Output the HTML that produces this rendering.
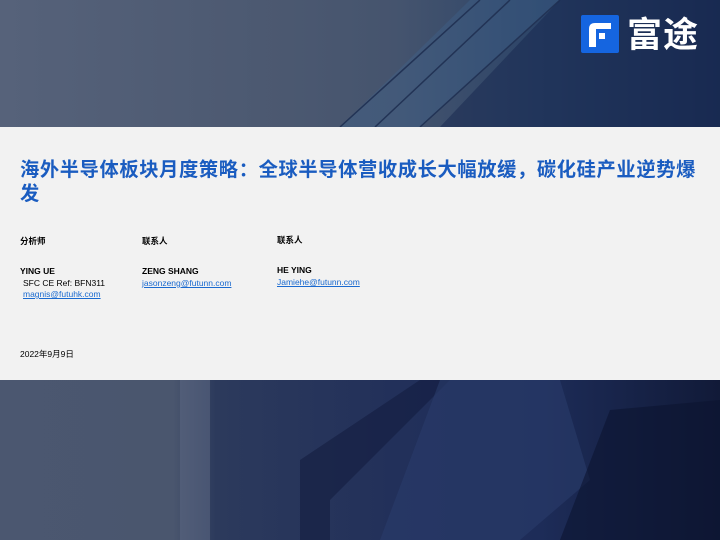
<!DOCTYPE html>
<html><head><meta charset="utf-8"><style>
body{margin:0;width:720px;height:540px;overflow:hidden;position:relative;font-family:"Liberation Sans","Noto Sans CJK SC",sans-serif;background:#1a2848}
.top{position:absolute;left:0;top:0;width:720px;height:127px;background:linear-gradient(90deg,#56627a 0%,#4b5870 40%,#45546e 55%,#2c4468 75%,#1b2e55 100%)}
.bot{position:absolute;left:0;top:380px;width:720px;height:160px;background:linear-gradient(90deg,#4b5770 0%,#4a566e 24%,#2c3a5c 30%,#22305a 55%,#1d2c58 75%,#111a38 100%)}
.band{position:absolute;left:0;top:127px;width:720px;height:253px;background:#f2f2f2}
.t{position:absolute;color:#1a5cc0;font-weight:bold;font-size:19.3px;line-height:24px;letter-spacing:0.6px;left:20px;top:156px;width:700px;white-space:nowrap;font-family:"Noto Sans CJK SC",sans-serif}
.s{position:absolute;font-size:8.5px;color:#000}
.b{font-weight:bold}
a{color:#1a6ad0;text-decoration:underline}
</style></head><body>
<div class="top">
<svg width="720" height="127" style="position:absolute;left:0;top:0">
<polygon points="470,0 560,0 420,127 340,127" fill="#3f6590" opacity=".35"/>
<line x1="480" y1="0" x2="340" y2="127" stroke="#223355" stroke-width="1.5"/>
<line x1="510" y1="0" x2="375" y2="127" stroke="#223355" stroke-width="1.5"/>
<line x1="560" y1="0" x2="420" y2="127" stroke="#223355" stroke-width="1.5"/>
<polygon points="560,0 720,0 720,127 440,127" fill="#15264d" opacity=".5"/>
</svg>
<div style="position:absolute;left:581px;top:15px;width:38px;height:38px;background:#1565e0;border-radius:2px"></div>
<svg style="position:absolute;left:581px;top:15px" width="38" height="38"><path d="M8 32V14Q8 8 14 8H30V14H15V32Z" fill="#fff"/><rect x="18" y="18" width="6" height="6" fill="#fff"/></svg>
<div style="position:absolute;left:627px;top:13px;color:#fff;font-size:35px;line-height:40px;font-weight:bold;font-family:'Noto Sans CJK SC',sans-serif;letter-spacing:1px">富途</div>
</div>
<div class="band"></div>
<div class="bot">
<svg width="720" height="160" style="position:absolute;left:0;top:0">
<rect x="180" y="0" width="30" height="160" fill="#5a6580" opacity=".6"/>
<polygon points="420,0 450,0 330,120 330,160 300,160 300,80" fill="#10183a" opacity=".5"/>
<polygon points="440,0 560,0 590,100 520,160 380,160" fill="#2a3c6a" opacity=".6"/>
<polygon points="610,30 720,20 720,160 560,160" fill="#0b1430" opacity=".6"/>
</svg>
</div>
<div class="t">海外半导体板块月度策略：全球半导体营收成长大幅放缓，碳化硅产业逆势爆<br>发</div>
<div class="s b" style="left:20px;top:235px">分析师</div>
<div class="s b" style="left:142px;top:235px">联系人</div>
<div class="s b" style="left:277px;top:234px">联系人</div>
<div class="s b" style="left:20px;top:266px">YING UE</div>
<div class="s" style="left:23px;top:278px">SFC CE Ref: BFN311</div>
<div class="s" style="left:23px;top:289px"><a>magnis@futuhk.com</a></div>
<div class="s b" style="left:142px;top:266px">ZENG SHANG</div>
<div class="s" style="left:142px;top:278px"><a>jasonzeng@futunn.com</a></div>
<div class="s b" style="left:277px;top:265px">HE YING</div>
<div class="s" style="left:277px;top:277px"><a>Jamiehe@futunn.com</a></div>
<div class="s" style="left:20px;top:348px">2022年9月9日</div>
</body></html>
